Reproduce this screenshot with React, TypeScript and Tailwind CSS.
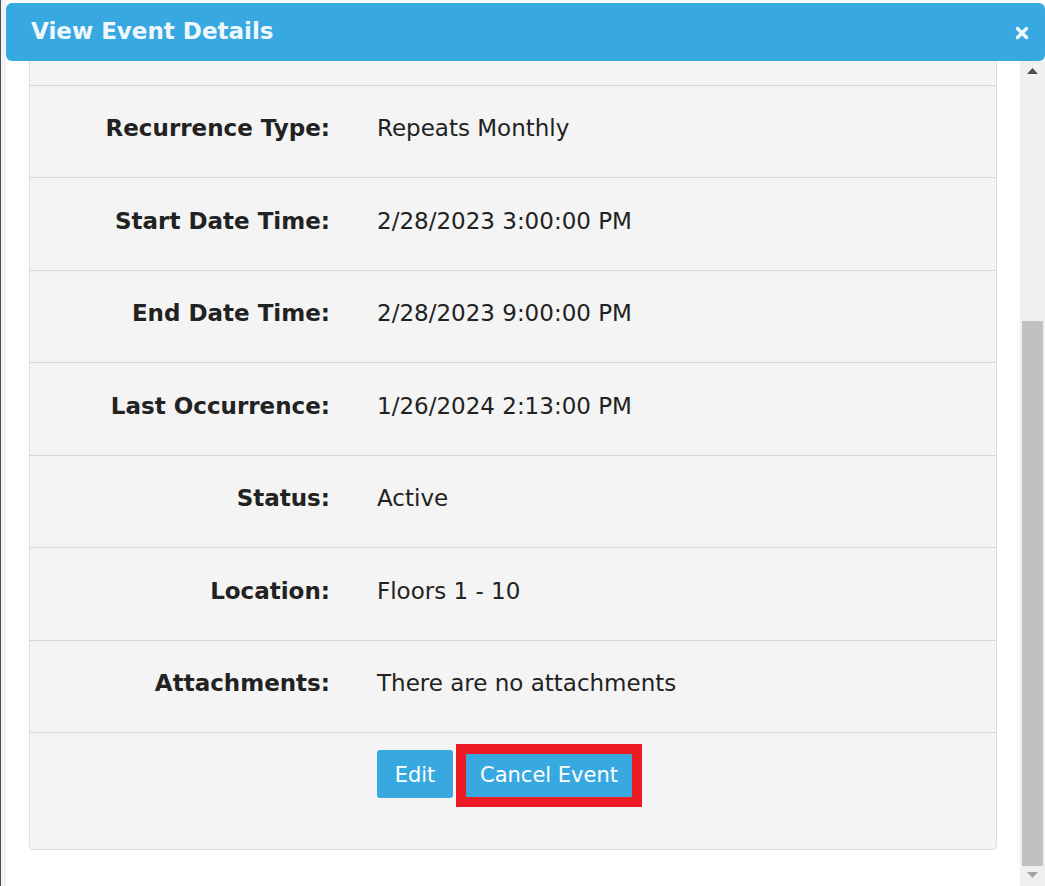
import React from "react";

const rows: [string, string][] = [
  ["Recurrence Type:", "Repeats Monthly"],
  ["Start Date Time:", "2/28/2023 3:00:00 PM"],
  ["End Date Time:", "2/28/2023 9:00:00 PM"],
  ["Last Occurrence:", "1/26/2024 2:13:00 PM"],
  ["Status:", "Active"],
  ["Location:", "Floors 1 - 10"],
  ["Attachments:", "There are no attachments"],
];

export default function App() {
  return (
    <div
      className="w-[1045px] h-[886px] overflow-hidden bg-white flex text-[#222]"
      style={{ fontFamily: '"DejaVu Sans", Verdana, sans-serif' }}
    >
      <div className="w-[6px] flex">
        <div className="w-px bg-[#4a4f57]" />
        <div className="flex-1 bg-[#eef2f5]" />
      </div>
      <div className="flex-1 flex flex-col">
        <div className="h-[3px]" />
        <div className="h-[58px] rounded-[6px] bg-[#38a9e0] flex items-center justify-between pl-[25px] pr-[16px]">
          <div className="text-[#f0f8fd] font-bold text-[23px] leading-none pb-[2px]">View Event Details</div>
          <svg width="14" height="14" viewBox="0 0 14 14" className="mt-[1px]">
            <path d="M2.5 2.5 L11.5 11.5 M11.5 2.5 L2.5 11.5" stroke="#f0f8fd" strokeWidth="3.4" strokeLinecap="round" />
          </svg>
        </div>
        <div className="flex-1 flex">
          <div className="flex-1 pl-[23px] pr-[23px]">
            <div className="border-x border-[#dcdcdc] bg-[#f4f4f4] h-[25px] border-b border-b-[#d6d6d6]" />
            {rows.map(([k, v], i) => (
              <div
                key={k}
                className={`border-x border-[#dcdcdc] bg-[#f4f4f4] border-b border-b-[#d6d6d6] flex items-center pb-[6px] ${i % 2 === 0 ? "h-[92px]" : "h-[93px]"}`}
              >
                <div className="w-[300px] text-right font-bold text-[23px]">{k}</div>
                <div className="pl-[47px] text-[23px]">{v}</div>
              </div>
            ))}
            <div className="border-x border-b border-[#dcdcdc] rounded-b-[5px] bg-[#f4f4f4] h-[117px] flex items-start pt-[17px] pl-[347px]">
              <div className="h-[48px] w-[76px] rounded-[3px] bg-[#38a9e0] text-white text-[21px] flex items-center justify-center pt-[3px]">
                Edit
              </div>
              <div className="ml-[3px] -mt-[6px] border-[10px] border-[#ed1c24]">
                <div className="h-[43px] w-[166px] bg-[#38a9e0] text-white text-[21px] flex items-center justify-center">
                  Cancel Event
                </div>
              </div>
            </div>
          </div>
          <div className="w-[25px] bg-[#f0f0f0] flex flex-col items-center">
            <div className="h-[20px] flex items-center justify-center">
              <svg width="11" height="6" viewBox="0 0 11 6"><path d="M5.5 0 L11 6 L0 6 Z" fill="#505050" /></svg>
            </div>
            <div className="h-[240px]" />
            <div className="w-[21px] h-[545px] bg-[#c1c1c1]" />
            <div className="flex-1 flex items-center justify-center pb-[2px]">
              <svg width="11" height="6" viewBox="0 0 11 6"><path d="M0 0 L11 0 L5.5 6 Z" fill="#a3a3a3" /></svg>
            </div>
          </div>
        </div>
      </div>
    </div>
  );
}
